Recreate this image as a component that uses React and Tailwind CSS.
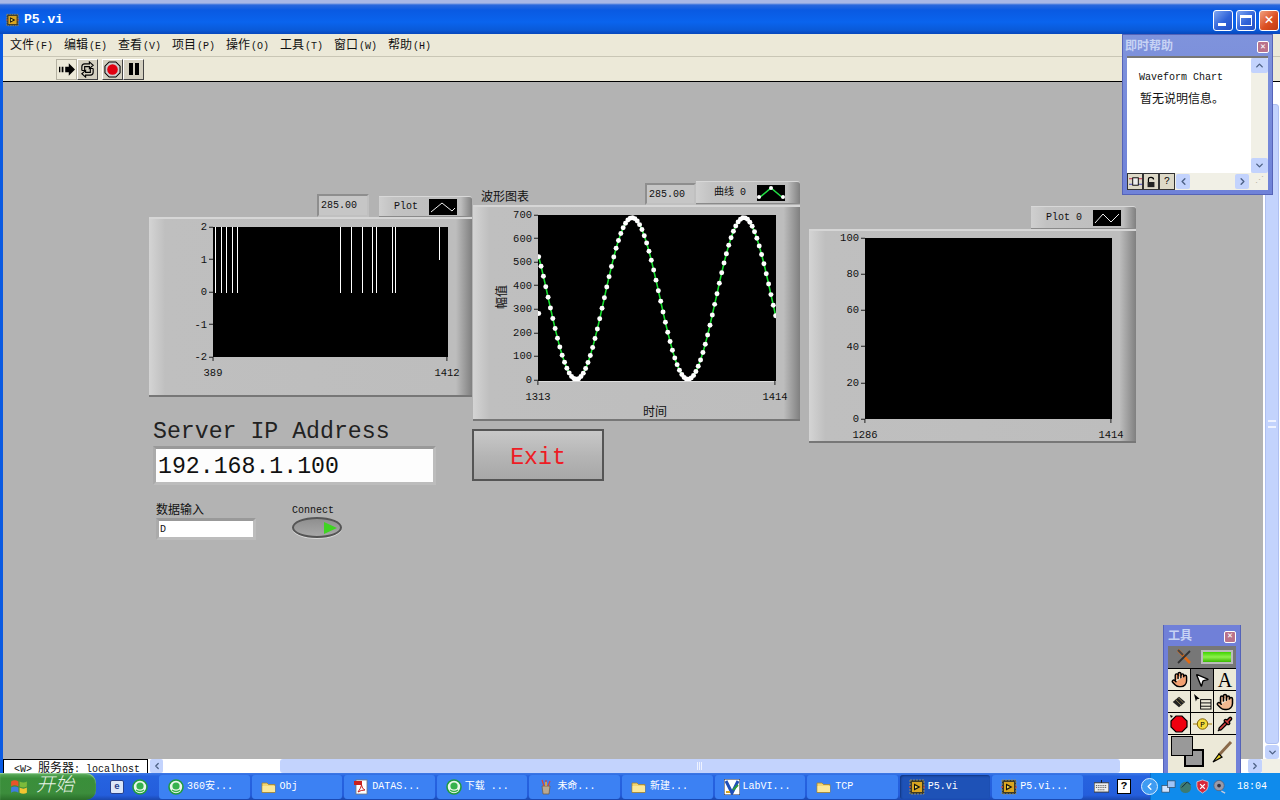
import { ChevronDown, ChevronLeft, ChevronRight, ChevronUp, Hand, MousePointer2, Pipette } from "lucide-react";

const MENU = [
  ["文件", "(F)"],
  ["编辑", "(E)"],
  ["查看", "(V)"],
  ["项目", "(P)"],
  ["操作", "(O)"],
  ["工具", "(T)"],
  ["窗口", "(W)"],
  ["帮助", "(H)"],
];

const TASKS = [
  { icon: "360", label: "360安..." },
  { icon: "folder", label: "Obj" },
  { icon: "pdf", label: "DATAS..." },
  { icon: "360", label: "下载 ..." },
  { icon: "paint", label: "未命..." },
  { icon: "folder", label: "新建..." },
  { icon: "lab", label: "LabVI..." },
  { icon: "folder", label: "TCP" },
  { icon: "vi", label: "P5.vi", active: true },
  { icon: "vi", label: "P5.vi..." },
];

const PULSES = [
  [2.5, 66],
  [8.5, 66],
  [13.5, 66],
  [19.5, 66],
  [24.5, 66],
  [127.5, 66],
  [138.5, 66],
  [149.5, 66],
  [159.5, 66],
  [163.5, 66],
  [179.5, 66],
  [182.5, 66],
  [226.5, 33],
];

// sine samples of the middle chart, one per x unit of the 1313-1414 axis
const SAMPLES = Array.from({ length: 102 }, (_, i) => {
  const x = i * 2.36;
  const v = 350 + 345 * Math.cos((2 * Math.PI * (x - 94)) / 112.4);
  return { x, y: 166.5 - v * 0.2357 };
});

function ViIcon({ className }) {
  return (
    <svg viewBox="0 0 16 16" className={className}>
      <rect x="1" y="1" width="14" height="14" fill="#3a3a2a" stroke="#8c8c70" strokeDasharray="2 1" />
      <rect x="3" y="3" width="10" height="10" fill="#d9a520" />
      <path d="M5 4.5 L11.5 8 L5 11.5 Z" fill="#111" />
      <path d="M6 6.5 L9 8 L6 9.5 Z" fill="#f7e04a" />
      <path d="M0 8 H2 M14 8 H16" stroke="#d33" />
    </svg>
  );
}

function GreenIcon() {
  return (
    <svg viewBox="0 0 16 16" className="w-[16px] h-[16px] shrink-0">
      <circle cx="8" cy="8" r="7" fill="#e9f7e9" stroke="#1f9b3f" strokeWidth="1.6" />
      <circle cx="8" cy="7" r="3.6" fill="#37b24d" />
      <path d="M4 11 Q8 14 12 11" stroke="#37b24d" fill="none" strokeWidth="1.4" />
    </svg>
  );
}

function FolderIcon() {
  return (
    <svg viewBox="0 0 16 16" className="w-[16px] h-[16px] shrink-0">
      <path d="M1 4 H6 L7.5 5.5 H14 V13.5 H1 Z" fill="#f3d672" stroke="#a5832c" strokeWidth="0.8" />
      <path d="M1.5 7 H14 V13 H1.5 Z" fill="#fbe89a" />
    </svg>
  );
}

function TaskIcon({ kind }) {
  if (kind === "360") return <GreenIcon />;
  if (kind === "folder") return <FolderIcon />;
  if (kind === "vi") return <ViIcon className="w-[16px] h-[16px] shrink-0" />;
  if (kind === "pdf") {
    return (
      <svg viewBox="0 0 16 16" className="w-[16px] h-[16px] shrink-0">
        <rect x="3" y="1" width="11" height="14" fill="#fff" stroke="#777" strokeWidth="0.8" />
        <rect x="1" y="2" width="8" height="4" fill="#c9201d" />
        <path d="M5 13 Q8 9 8.5 6 Q9 10 12 11 Q8 11 5 13" fill="none" stroke="#c9201d" />
      </svg>
    );
  }
  if (kind === "paint") {
    return (
      <svg viewBox="0 0 16 16" className="w-[16px] h-[16px] shrink-0">
        <path d="M4 7 H12 L11 15 H5 Z" fill="#b9a890" stroke="#6b5a44" strokeWidth="0.7" />
        <path d="M6 7 L4 1 M8 7 V1 M10 7 L12 2" stroke="#d4483a" strokeWidth="1.3" />
        <path d="M8 7 V3" stroke="#e8c83c" strokeWidth="1.3" />
      </svg>
    );
  }
  return (
    <svg viewBox="0 0 16 16" className="w-[16px] h-[16px] shrink-0">
      <rect width="16" height="16" fill="#fff" stroke="#223" strokeWidth="1" />
      <path d="M2 2 L8 14 L14 2" fill="none" stroke="#1f4fb8" strokeWidth="3" />
      <path d="M9 11 L14 6" stroke="#2e9b3a" strokeWidth="2" />
      <path d="M2 13 H6" stroke="#d9a520" strokeWidth="2" />
    </svg>
  );
}

function WinButton({ tone, children }) {
  return (
    <div
      className={`w-[20px] h-[21px] rounded-[3px] border border-white flex items-center justify-center ${
        tone === "red"
          ? "bg-[linear-gradient(135deg,#f0a080,#dc4f22_55%,#c03a10)]"
          : "bg-[linear-gradient(135deg,#7fa6f2,#2f62d8_55%,#2450c4)]"
      }`}
    >
      {children}
    </div>
  );
}

function TitleBar() {
  return (
    <div className="h-[34px] shrink-0 flex items-center pl-[6px] pr-[1px] pt-[6px] bg-[linear-gradient(180deg,#a8b8e6_0,#a8b8e6_3px,#2a68dc_5px,#0a5ae2_10px,#0a64ee_22px,#0a5ad8_30px,#0748bc)]">
      <ViIcon className="w-[13px] h-[14px]" />
      <span className="ml-[5px] text-[13px] font-bold text-white">P5.vi</span>
      <div className="ml-auto flex gap-[3px]">
        <WinButton>
          <div className="w-[8px] h-[3px] bg-white mt-[9px] -ml-[3px]" />
        </WinButton>
        <WinButton>
          <div className="w-[12px] h-[11px] border border-white border-t-[3px]" />
        </WinButton>
        <WinButton tone="red">
          <span className="text-white text-[15px] font-bold leading-none">✕</span>
        </WinButton>
      </div>
    </div>
  );
}

function MenuBar() {
  return (
    <div className="h-[23px] shrink-0 flex items-center gap-[12px] pl-[7px] pt-[2px] bg-[#ece9d8] border-b border-[#c9c6b5]">
      {MENU.map(([name, key]) => (
        <span key={name} className="w-[42px] flex items-center text-[12px] text-[#111] whitespace-nowrap">
          {name}
          <span className="text-[10px] ml-[1px]">{key}</span>
        </span>
      ))}
    </div>
  );
}

function ToolButton({ flat, children }) {
  return (
    <div
      className={`w-[21px] h-[21px] flex items-center justify-center border ${
        flat ? "border-[#b5b2a2] bg-[#ece9d8]" : "border-t-[#fff] border-l-[#fff] border-r-[#444] border-b-[#444] bg-[#d4d0c0]"
      }`}
    >
      {children}
    </div>
  );
}

function ToolBar() {
  return (
    <div className="h-[25px] shrink-0 flex items-center pl-[53px] bg-[#ece9d8] border-b border-black">
      <ToolButton flat>
        <svg viewBox="0 0 18 14" className="w-[16px] h-[13px]">
          <path d="M7 4 H11 V0 L18 7 L11 14 V10 H7 Z" fill="#000" />
          <path d="M0 4 H1.5 V10 H0 Z M3 4 H5 V10 H3 Z" fill="#000" />
        </svg>
      </ToolButton>
      <ToolButton>
        <svg viewBox="0 0 18 18" className="w-[17px] h-[17px]" fill="none" stroke="#000" strokeWidth="1.2">
          <path d="M3 10 V6 Q3 3 6 3 H11 V1 L15 4.5 L11 8 V6 H6 V10 L3 10" />
          <path d="M15 8 V12 Q15 15 12 15 H7 V17 L3 13.5 L7 10 V12 H12 V8 L15 8" />
        </svg>
      </ToolButton>
      <div className="w-[4px]" />
      <ToolButton>
        <svg viewBox="0 0 18 18" className="w-[17px] h-[17px]">
          <path d="M5.5 1 H12.5 L17 5.5 V12.5 L12.5 17 H5.5 L1 12.5 V5.5 Z" fill="#ccc" stroke="#000" strokeWidth="1.1" />
          <circle cx="9" cy="9" r="5.6" fill="#e00010" />
        </svg>
      </ToolButton>
      <ToolButton>
        <div className="flex gap-[2px]">
          <div className="w-[4px] h-[12px] bg-black" />
          <div className="w-[4px] h-[12px] bg-black" />
        </div>
      </ToolButton>
    </div>
  );
}

function Readout({ className }) {
  return (
    <div
      className={`absolute flex items-center pl-[2px] text-[10px] text-[#111] bg-[#c6c6c6] border-2 border-t-[#8e8e8e] border-l-[#8e8e8e] border-r-[#c0c0c0] border-b-[#c0c0c0] ${className}`}
    >
      285.00
    </div>
  );
}

function Legend({ className, label, children }) {
  return (
    <div
      className={`absolute flex items-center justify-end gap-[11px] pr-[15px] text-[10px] text-[#111] border-b border-[#8a8a8a] border-t border-t-[#d8d8d8] bg-[linear-gradient(90deg,#cfcfcf,#c2c2c2_15%,#bdbdbd_88%,#808080)] rounded-tr-[3px] ${className}`}
    >
      <span>{label}</span>
      <div className="w-[28px] h-[16px] bg-black flex items-center justify-center">{children}</div>
    </div>
  );
}

function Zigzag({ d }) {
  return (
    <svg viewBox="0 0 28 16" className="w-[28px] h-[16px]">
      <path d={d} fill="none" stroke="#eee" strokeWidth="1" />
    </svg>
  );
}

function Chart({ panel, plot, plotW, plotH, yTicks, xTicks, children }) {
  return (
    <div
      className={`absolute border-t-2 border-t-[#d6d6d6] border-b-2 border-b-[#777] bg-[linear-gradient(90deg,#d4d4d4,#bfbfbf_5%,#bdbdbd_95%,#808080)] ${panel}`}
    >
      <div className={`absolute bg-black ${plot}`}>
        {children}
        {yTicks.map((label, i) => (
          <div
            key={label}
            className="absolute right-full flex items-center gap-[2px] -translate-y-1/2 text-[10.5px] leading-none text-[#111]"
            style={{ top: (i * plotH) / (yTicks.length - 1) }}
          >
            {label}
            <div className="w-[4px] h-px bg-[#222]" />
          </div>
        ))}
        {xTicks.map((label, i) => (
          <div
            key={label}
            className="absolute top-full flex flex-col items-center -translate-x-1/2 text-[10.5px] leading-none text-[#111]"
            style={{ left: i * (plotW - 1) }}
          >
            <div className="w-px h-[4px] mb-[7px] bg-[#222]" />
            {label}
          </div>
        ))}
      </div>
    </div>
  );
}

function FrontPanel() {
  return (
    <div className="relative flex-1 bg-[#b3b3b3]">
      {/* digital chart */}
      <Readout className="left-[314px] top-[112px] w-[52px] h-[23px]" />
      <Legend className="left-[376px] top-[114px] w-[93px] h-[21px]" label="Plot">
        <Zigzag d="M2 13 L13 4 L23 12 L26 9" />
      </Legend>
      <Chart
        panel="left-[146px] top-[135px] w-[323px] h-[180px]"
        plot="left-[64px] top-[8px] w-[235px] h-[130px]"
        plotW={235}
        plotH={130}
        yTicks={["2", "1", "0", "-1", "-2"]}
        xTicks={["389", "1412"]}
      >
        <svg viewBox="0 0 235 130" className="absolute inset-0 w-full h-full">
          {PULSES.map(([x, h]) => (
            <path key={x} d={`M${x} 0 V${h}`} stroke="#fff" strokeWidth="1" />
          ))}
        </svg>
      </Chart>

      {/* waveform chart */}
      <span className="absolute left-[478px] top-[106px] mt-[2px] text-[12px] leading-[16px] text-[#111]">波形图表</span>
      <Readout className="left-[642px] top-[101px] w-[51px] h-[22px]" />
      <Legend className="left-[693px] top-[99px] w-[104px] h-[23px]" label="曲线 0">
        <svg viewBox="0 0 28 16" className="w-[28px] h-[16px]">
          <path d="M2 13 L14 3 L26 13" fill="none" stroke="#22dd44" strokeWidth="1.6" />
          <circle cx="2" cy="12" r="2" fill="#fff" />
          <circle cx="14" cy="3" r="2" fill="#fff" />
          <circle cx="26" cy="12" r="2" fill="#fff" />
        </svg>
      </Legend>
      <Chart
        panel="left-[470px] top-[123px] w-[327px] h-[216px]"
        plot="left-[65px] top-[8px] w-[238px] h-[167px] border-b border-[#ddd]"
        plotW={238}
        plotH={165}
        yTicks={["700", "600", "500", "400", "300", "200", "100", "0"]}
        xTicks={["1313", "1414"]}
      >
        <svg viewBox="0 0 238 167" className="absolute inset-0 w-full h-full overflow-hidden">
          <path
            d={SAMPLES.map((p, i) => `${i ? "L" : "M"}${p.x.toFixed(1)} ${p.y.toFixed(1)}`).join(" ")}
            fill="none"
            stroke="#18e030"
            strokeWidth="1.6"
          />
          {SAMPLES.map((p) => (
            <circle key={p.x} cx={p.x} cy={p.y} r="2.5" fill="#fff" />
          ))}
          <circle cx="0" cy="99" r="2.5" fill="#fff" />
        </svg>
        <span className="absolute -left-[47px] top-[75px] w-[24px] -rotate-90 text-[12px] leading-[14px] text-[#111]">幅值</span>
        <span className="absolute left-[105px] top-[191px] text-[12px] leading-[14px] text-[#111]">时间</span>
      </Chart>

      {/* third chart */}
      <Legend className="left-[1028px] top-[124px] w-[105px] h-[23px]" label="Plot 0">
        <Zigzag d="M2 13 L10 4 L18 12 L26 4" />
      </Legend>
      <Chart
        panel="left-[806px] top-[147px] w-[327px] h-[214px]"
        plot="left-[56px] top-[7px] w-[247px] h-[181px]"
        plotW={247}
        plotH={181}
        yTicks={["100", "80", "60", "40", "20", "0"]}
        xTicks={["1286", "1414"]}
      />

      {/* string control */}
      <span className="absolute left-[150px] top-[337px] text-[23.2px] leading-[26px] text-[#222]">Server IP Address</span>
      <div className="absolute left-[150px] top-[364px] w-[283px] h-[39px] border-[3px] border-t-[#999] border-l-[#aaa] border-r-[#bcbcbc] border-b-[#bcbcbc] bg-[#fdfdfd] flex items-center pl-[2px] pt-[4px] text-[23.2px] text-[#111]">
        192.168.1.100
      </div>

      {/* exit button */}
      <div className="absolute left-[469px] top-[347px] w-[132px] h-[52px] border-2 border-[#555] bg-[linear-gradient(180deg,#c8c8c8,#b4b4b4_55%,#a8a8a8)] flex items-center justify-center pt-[7px] text-[23.2px] text-[#ee1c25]">
        Exit
      </div>

      {/* data input */}
      <span className="absolute left-[153px] top-[421px] text-[12px] leading-[16px] text-[#111]">数据输入</span>
      <div className="absolute left-[153px] top-[436px] w-[100px] h-[22px] border-[3px] border-t-[#999] border-l-[#aaa] border-r-[#bcbcbc] border-b-[#bcbcbc] bg-white flex items-center pl-[1px] text-[10px] text-[#111]">
        D
      </div>

      {/* connect LED */}
      <span className="absolute left-[289px] top-[422px] text-[10px] leading-[14px] text-[#111]">Connect</span>
      <div className="absolute left-[289px] top-[435px] w-[50px] h-[21px] rounded-[50%] border-2 border-[#555] bg-[linear-gradient(180deg,#8f8f8f,#a8a8a8)] shadow-[0_1px_0_#d8d8d8] flex items-center justify-end pr-[3px]">
        <svg viewBox="0 0 14 12" className="w-[14px] h-[12px]">
          <path d="M1 0 L14 6 L1 12 Z" fill="#3fd422" />
        </svg>
      </div>
    </div>
  );
}

function VScroll() {
  return (
    <div className="w-[17px] shrink-0 bg-white flex flex-col pl-[2px] pr-[1px]">
      <div className="flex-1 mt-[22px] mb-[1px] rounded-[3px] bg-[#c3d3fd] border border-[#aebff0] flex items-center justify-center">
        <div className="w-[8px] h-[8px] border-y-2 border-[#eef2ff]" />
      </div>
      <div className="h-[14px] rounded-[3px] bg-[#c3d3fd] flex items-center justify-center">
        <ChevronDown size={11} strokeWidth={3} className="text-[#4d6185]" />
      </div>
    </div>
  );
}

function StatusRow() {
  return (
    <div className="h-[14px] shrink-0 flex bg-white overflow-hidden">
      <div className="w-[145px] h-[18px] border border-black pl-[10px] pt-[1px] text-[12px] leading-[16px] text-[#111] whitespace-nowrap">
        <span className="text-[10px]">{"<W> "}</span>
        服务器
        <span className="text-[10px]">: localhost</span>
      </div>
      <div className="w-[13px] ml-[2px] rounded-[2px] bg-[#c3d3fd] flex items-center justify-center">
        <ChevronLeft size={10} strokeWidth={3} className="text-[#4d6185]" />
      </div>
      <div className="w-[117px]" />
      <div className="flex-1 rounded-[3px] bg-[#c3d3fd] flex items-center justify-center">
        <div className="w-[6px] h-[8px] bg-[repeating-linear-gradient(90deg,#eef2ff_0,#eef2ff_1px,transparent_1px,transparent_2px)]" />
      </div>
      <div className="w-[128px]" />
      <div className="w-[14px] rounded-[2px] bg-[#c3d3fd] flex items-center justify-center">
        <ChevronRight size={10} strokeWidth={3} className="text-[#4d6185]" />
      </div>
      <div className="w-[18px] bg-[#f1f0e6]" />
    </div>
  );
}

function HelpWindow() {
  return (
    <div className="absolute left-[1122px] top-[34px] w-[151px] h-[161px] p-[4px] pt-[3px] flex flex-col bg-[linear-gradient(180deg,#7f93dc,#6f82d8)] border border-[#5563b8]">
      <div className="h-[18px] shrink-0 flex items-center justify-between -ml-[2px] -mr-[1px] text-[12px] font-bold text-[#c7d3f4]">
        <span>即时帮助</span>
        <div className="w-[12px] h-[12px] rounded-[2px] border border-white bg-[#b9738c] flex items-center justify-center text-[9px] leading-none font-bold text-white">✕</div>
      </div>
      <div className="flex-1 flex flex-col bg-white border-t-2 border-[#777] min-h-0">
        <div className="flex-1 flex min-h-0">
          <div className="flex-1 pl-[12px] pt-[13px] text-[#111]">
            <div className="text-[10px] leading-[14px]">Waveform Chart</div>
            <div className="text-[12px] leading-[16px] mt-[7px] ml-[1px]">暂无说明信息。</div>
          </div>
          <div className="w-[17px] flex flex-col justify-between bg-[#f1f0e6]">
            <div className="h-[15px] rounded-[2px] bg-[#c3d3fd] flex items-center justify-center">
              <ChevronUp size={11} strokeWidth={3} className="text-[#4d6185]" />
            </div>
            <div className="h-[15px] rounded-[2px] bg-[#c3d3fd] flex items-center justify-center">
              <ChevronDown size={11} strokeWidth={3} className="text-[#4d6185]" />
            </div>
          </div>
        </div>
        <div className="h-[17px] shrink-0 flex items-center bg-[#f1f0e6]">
          {["grid", "lock", "?"].map((b) => (
            <div key={b} className="w-[16px] h-[17px] border border-[#333] bg-[#ddd9c8] flex items-center justify-center text-[10px] leading-none">
              {b === "grid" && (
                <svg viewBox="0 0 14 14" className="w-[13px] h-[13px]" fill="none">
                  <path d="M0 4 H14" stroke="#c02040" />
                  <path d="M0 10 H14" stroke="#4040c0" />
                  <rect x="4" y="3" width="6" height="8" fill="#eee" stroke="#000" />
                </svg>
              )}
              {b === "lock" && (
                <svg viewBox="0 0 14 14" className="w-[12px] h-[12px]" fill="none">
                  <path d="M4 7 V4 Q4 1.5 7 1.5 Q10 1.5 10 4" stroke="#000" strokeWidth="1.4" />
                  <rect x="3" y="7" width="8" height="6" fill="#222" />
                </svg>
              )}
              {b === "?" && "?"}
            </div>
          ))}
          <div className="w-[14px] h-[15px] ml-[1px] rounded-[2px] bg-[#c3d3fd] flex items-center justify-center">
            <ChevronLeft size={11} strokeWidth={3} className="text-[#4d6185]" />
          </div>
          <div className="flex-1" />
          <div className="w-[14px] h-[15px] rounded-[2px] bg-[#c3d3fd] flex items-center justify-center">
            <ChevronRight size={11} strokeWidth={3} className="text-[#4d6185]" />
          </div>
          <div className="w-[19px] text-right pr-[3px] text-[9px] leading-none tracking-[1px] text-[#b9b6a6]">⋰</div>
        </div>
      </div>
    </div>
  );
}

function PaletteCell({ selected, children }) {
  return (
    <div
      className={`h-[21px] flex items-center justify-center ${
        selected ? "bg-[#777]" : "bg-[#ece9d8]"
      }`}
    >
      {children}
    </div>
  );
}

function ToolsPalette() {
  return (
    <div className="absolute left-[1163px] top-[625px] w-[78px] h-[148px] px-[4px] flex flex-col bg-[#7080d8] border-x border-[#5563b8]">
      <div className="h-[21px] shrink-0 flex items-center justify-between pt-[2px] text-[12px] font-bold text-[#c7d3f4]">
        <span>工具</span>
        <div className="w-[12px] h-[12px] rounded-[2px] border border-white bg-[#b9738c] flex items-center justify-center text-[9px] leading-none font-bold text-white">✕</div>
      </div>
      <div className="flex-1 flex flex-col gap-px bg-black min-h-0">
        <div className="h-[22px] shrink-0 flex items-center bg-[#777] pl-[7px] gap-[8px]">
          <svg viewBox="0 0 18 18" className="w-[18px] h-[18px]">
            <path d="M3 2 L15 15" stroke="#e06a14" strokeWidth="2.6" />
            <path d="M15 3 L3 15" stroke="#333" strokeWidth="1.8" />
            <path d="M3 2 L8 7" stroke="#444" strokeWidth="2" />
          </svg>
          <div className="w-[32px] h-[14px] border-2 border-[#bbb] bg-[linear-gradient(180deg,#3fd400,#8ef04c_50%,#38b800)]" />
        </div>
        <div className="grid grid-cols-3 gap-px">
          <PaletteCell>
            <Hand size={17} className="text-black fill-[#f2a070]" />
          </PaletteCell>
          <PaletteCell selected>
            <MousePointer2 size={16} className="text-black fill-white" />
          </PaletteCell>
          <PaletteCell>
            <span className="text-[20px] leading-none font-['Liberation_Serif',serif] text-black">A</span>
          </PaletteCell>
          <PaletteCell>
            <svg viewBox="0 0 18 18" className="w-[16px] h-[16px]">
              <path d="M2 9 L9 3 L16 9 L9 15 Z" fill="#222" />
              <path d="M5 6 L12 13 M8 4 L14 10" stroke="#9b8b5a" strokeWidth="1" />
            </svg>
          </PaletteCell>
          <PaletteCell>
            <svg viewBox="0 0 20 18" className="w-[19px] h-[17px]">
              <path d="M1 1 L7 6 L4 6.5 L3 9 Z" fill="#000" />
              <rect x="8" y="7" width="11" height="10" fill="#ece9d8" stroke="#000" />
              <path d="M8 10.5 H19 M8 14 H19" stroke="#000" />
            </svg>
          </PaletteCell>
          <PaletteCell>
            <Hand size={18} className="text-black fill-[#f2b890]" />
          </PaletteCell>
          <PaletteCell>
            <svg viewBox="0 0 18 18" className="w-[18px] h-[18px]">
              <path d="M6 1 H12 L17 6 V12 L12 17 H6 L1 12 V6 Z" fill="#f00010" stroke="#000" strokeWidth="1.2" />
              <path d="M0 0 L3 1 L1 3 Z" fill="#000" />
            </svg>
          </PaletteCell>
          <PaletteCell>
            <svg viewBox="0 0 20 14" className="w-[19px] h-[14px]">
              <path d="M0 7 H20" stroke="#a07800" />
              <circle cx="10" cy="7" r="5.5" fill="#f5dc3c" stroke="#7a5c00" />
              <text x="10" y="10" fontSize="8" textAnchor="middle" fill="#000">P</text>
            </svg>
          </PaletteCell>
          <PaletteCell>
            <Pipette size={16} className="text-black fill-[#d84040]" />
          </PaletteCell>
        </div>
        <div className="flex-1 relative bg-[#ece9d8] min-h-0">
          <div className="absolute left-[3px] top-[1px] w-[22px] h-[20px] bg-[#999] border border-black z-10" />
          <div className="absolute left-[16px] top-[14px] w-[20px] h-[18px] bg-[#999] border-2 border-black" />
          <svg viewBox="0 0 24 24" className="absolute left-[41px] top-[5px] w-[24px] h-[24px]">
            <path d="M22 2 L10 15" stroke="#8a6a4a" strokeWidth="3" />
            <path d="M10 14 L13 17 L4 22 Z" fill="#e8d020" stroke="#000" strokeWidth="1.2" />
          </svg>
        </div>
      </div>
    </div>
  );
}

function Taskbar() {
  return (
    <div className="h-[27px] shrink-0 flex items-stretch bg-[linear-gradient(180deg,#3f7ae6,#2663e0_12%,#245edc_82%,#1a48ae)] relative z-20">
      <div className="w-[96px] shrink-0 rounded-r-[10px] flex items-center pl-[10px] gap-[8px] bg-[linear-gradient(180deg,#5fae5f,#3a8f3a_20%,#3c8d3c_75%,#2a6f2a)] shadow-[inset_0_1px_1px_#9ad09a]">
        <svg viewBox="0 0 16 16" className="w-[18px] h-[18px]">
          <path d="M1 3 Q4 1 7.5 3 V7.5 Q4 5.5 1 7.5 Z" fill="#e8532b" />
          <path d="M8.5 3 Q12 5 15 3 V7.5 Q12 9.5 8.5 7.5 Z" fill="#7cbb3b" />
          <path d="M1 8.5 Q4 6.5 7.5 8.5 V13 Q4 11 1 13 Z" fill="#3f7ee0" />
          <path d="M8.5 8.5 Q12 10.5 15 8.5 V13 Q12 15 8.5 13 Z" fill="#f2c531" />
        </svg>
        <span className="text-[19px] italic font-light leading-none text-[#e7f3e7]">开始</span>
      </div>
      <div className="w-[63px] shrink-0 flex items-center justify-center gap-[8px] pl-[3px]">
        <div className="w-[14px] h-[14px] rounded-[2px] bg-[#dce6f8] border border-[#27408b] text-center text-[9px] leading-[12px] font-bold text-[#27408b]">e</div>
        <GreenIcon />
      </div>
      <div className="flex items-center gap-[2px]">
        {TASKS.map((t) => (
          <div
            key={t.label}
            className={`w-[90.6px] h-[24px] shrink-0 rounded-[3px] flex items-center gap-[3px] pl-[9px] text-[10px] text-white whitespace-nowrap overflow-hidden ${
              t.active ? "bg-[#1e52b7] shadow-[inset_1px_1px_2px_#12357f]" : "bg-[#3c81f3]"
            }`}
          >
            <TaskIcon kind={t.icon} />
            <span>{t.label}</span>
          </div>
        ))}
      </div>
      <div className="flex-1 flex items-center pl-[11px] gap-[8px]">
        <svg viewBox="0 0 16 14" className="w-[15px] h-[13px]">
          <rect y="3" width="16" height="10" fill="#eee" stroke="#333" />
          <path d="M2 6 H14 M2 8 H14 M4 10.5 H12" stroke="#333" strokeDasharray="1 1" />
          <path d="M8 3 V0" stroke="#111" />
        </svg>
        <div className="w-[14px] h-[15px] bg-white border border-black text-center text-[11px] leading-[13px] font-bold text-black">?</div>
      </div>
      <div className="w-[130px] shrink-0 relative flex items-center pl-[10px] gap-[2px] bg-[#0f8bec] border-l border-[#0a6ecb] text-white">
        <div className="absolute -left-[10px] top-[5px] w-[17px] h-[17px] rounded-full bg-[#3f9cf2] border border-[#d8ecff] flex items-center justify-center">
          <ChevronLeft size={11} strokeWidth={3} />
        </div>
        <svg viewBox="0 0 16 16" className="w-[15px] h-[15px]">
          <rect x="1" y="7" width="8" height="7" fill="#cfe3ff" stroke="#345" strokeWidth="0.7" />
          <rect x="7" y="2" width="8" height="7" fill="#9fc5f8" stroke="#345" strokeWidth="0.7" />
        </svg>
        <svg viewBox="0 0 16 16" className="w-[15px] h-[15px]">
          <circle cx="8" cy="9" r="6" fill="#3d7a72" />
          <path d="M4 9 L10 3 L13 6" stroke="#123" fill="none" />
        </svg>
        <svg viewBox="0 0 16 16" className="w-[15px] h-[15px]">
          <path d="M8 1 L14 3 V8 Q14 12 8 15 Q2 12 2 8 V3 Z" fill="#d9263a" stroke="#eee" strokeWidth="0.7" />
          <path d="M5.5 5.5 L10.5 10.5 M10.5 5.5 L5.5 10.5" stroke="#fff" strokeWidth="1.4" />
        </svg>
        <svg viewBox="0 0 16 16" className="w-[15px] h-[15px]">
          <circle cx="7.5" cy="7" r="5.5" fill="#9a9aa8" stroke="#556" strokeWidth="0.7" />
          <circle cx="7.5" cy="7" r="2" fill="#334" />
          <path d="M10 13 L14 15" stroke="#ccd" strokeWidth="1.4" />
        </svg>
        <span className="ml-[8px] text-[10px]">18:04</span>
      </div>
    </div>
  );
}

export default function App() {
  return (
    <div className="relative w-[1280px] h-[800px] overflow-hidden flex flex-col bg-[#0a5ae2] font-['Liberation_Mono','Noto_Sans_CJK_SC',monospace]">
      <TitleBar />
      <div className="flex-1 flex flex-col min-h-0 pl-[3px]">
        <MenuBar />
        <ToolBar />
        <div className="flex-1 flex min-h-0">
          <FrontPanel />
          <VScroll />
        </div>
        <StatusRow />
      </div>
      <Taskbar />
      <HelpWindow />
      <ToolsPalette />
    </div>
  );
}
